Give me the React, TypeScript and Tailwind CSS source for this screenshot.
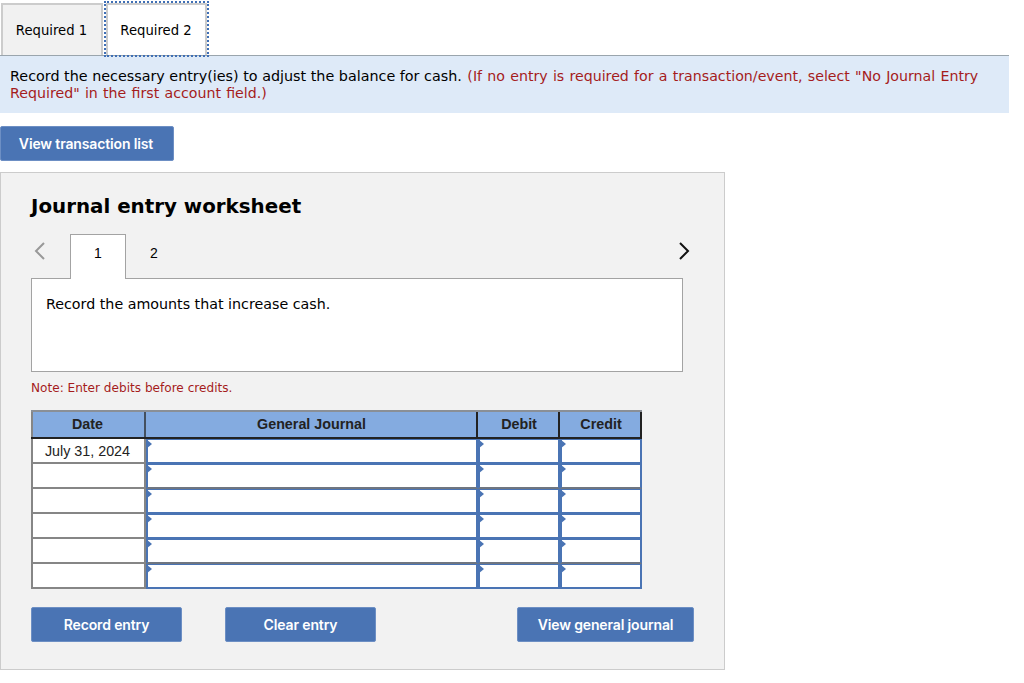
const verdana = "font-['DejaVu_Sans',sans-serif]";

function Cell({ w, gray }: { w: string; gray?: boolean }) {
  return (
    <div className={`relative ${w} h-full bg-white border-2 border-t border-[#4a74b4] ${gray ? "border-b-[#6f7680]" : ""}`}>
      <span className="absolute left-[-2px] top-[-1px] w-0 h-0 border-y-[5px] border-y-transparent border-l-[6px] border-l-[#4a74b4]" />
    </div>
  );
}

function Row({ date, gray }: { date?: string; gray?: boolean }) {
  return (
    <div className="flex h-[25px]">
      <div className="w-[115px] shrink-0 bg-white border-l-2 border-r-2 border-b-2 border-[#868686] pr-[2px] text-center text-[14.3px] leading-[24px] text-[#222]">
        {date}
      </div>
      <Cell w="w-[332px]" gray={gray} />
      <Cell w="w-[82px]" gray={gray} />
      <Cell w="w-[82px]" gray={gray} />
    </div>
  );
}

function Btn({ label, w, extra }: { label: string; w: string; extra?: string }) {
  return (
    <button className={`${w} ${extra ?? ""} h-[35px] rounded-[2px] bg-[#4a74b4] border border-[#6d8fc4] text-white text-[14px] font-semibold font-['Inter',sans-serif] tracking-[-0.14px]`}>
      {label}
    </button>
  );
}

export default function App() {
  return (
    <div className={`w-[1009px] h-[683px] bg-white ${verdana} text-black overflow-hidden`}>
      <div className="flex h-[56px] pt-[3px] pl-[1px] border-b border-[#9aa5ad]">
        <div className="w-[102px] h-[52px] bg-[#f1f1f1] border-2 border-b-0 border-[#cccccc] text-[13.2px] flex items-center justify-center pr-[1px] pt-[2px]">
          Required 1
        </div>
        <div className="relative z-10 ml-[3px] w-[101px] h-[52px] bg-white border-2 border-b-0 border-[#cccccc] outline-2 outline-dotted outline-[#3f6fb5] text-[13.2px] flex items-center justify-center pr-[1px] pt-[2px]">
          Required 2
        </div>
      </div>

      <div className="h-[57px] bg-[#deeaf8] px-[10px] pt-[12px] text-[14.33px] leading-[17px]">
        Record the necessary entry(ies) to adjust the balance for cash.{" "}
        <span className="ml-[1px] text-[#a51c1c] text-[14.2px] [word-spacing:0.7px]">
          (If no entry is required for a transaction/event, select "No Journal Entry Required" in the first account field.)
        </span>
      </div>

      <div className="mt-[13px]">
        <Btn label="View transaction list" w="w-[174px]" extra="pr-[2px]" />
      </div>

      <div className="mt-[11px] w-[725px] h-[498px] bg-[#f2f2f2] border border-[#cccccc] pl-[30px] pr-[41px]">
        <h2 className="pt-[21px] text-[19.85px] leading-[26px] font-bold">Journal entry worksheet</h2>

        <div className="relative mt-[14px] flex h-[45px] text-[14px] font-['Liberation_Sans',sans-serif]">
          <svg className="absolute left-[2px] top-[7px]" width="14" height="20" viewBox="0 0 14 20" fill="none">
            <path d="M11 2 L3 10 L11 18" stroke="#999999" strokeWidth="2" />
          </svg>
          <div className="relative z-10 ml-[39px] w-[56px] h-[45px] bg-white border border-b-0 border-[#a3a3a3] flex items-center justify-center pb-[7px]">
            1
          </div>
          <div className="w-[56px] flex items-center justify-center pb-[7px]">2</div>
          <svg className="absolute right-[-8px] top-[7px]" width="14" height="20" viewBox="0 0 14 20" fill="none">
            <path d="M3 2 L11 10 L3 18" stroke="#111111" strokeWidth="2" />
          </svg>
        </div>

        <div className="h-[94px] w-[652px] -mt-px bg-white border border-[#a3a3a3] pl-[14px] pt-[15px] text-[14.25px] leading-[20px]">
          Record the amounts that increase cash.
        </div>

        <p className="mt-[8px] text-[12.1px] leading-[16px] text-[#a51c1c]">Note: Enter debits before credits.</p>

        <div className="mt-[14px] w-[611px] font-['Liberation_Sans',sans-serif]">
          <div className="flex h-[29px] bg-[#84abe0] border-t-2 border-t-[#8a8f96] border-b-2 border-b-[#222222] text-[14.3px] font-bold text-[#222] text-center leading-[25px]">
            <div className="w-[115px] border-l-2 border-l-[#868686] border-r-2 border-r-[#44505f] pr-[2px]">Date</div>
            <div className="w-[332px] border-r-2 border-r-[#222] pl-[1px]">General Journal</div>
            <div className="w-[82px] border-r-2 border-r-[#222] pl-[2px]">Debit</div>
            <div className="w-[82px] border-r-2 border-r-[#222] pl-[2px]">Credit</div>
          </div>
          <Row date="July 31, 2024" />
          <Row gray />
          <Row />
          <Row />
          <Row gray />
          <Row />
        </div>

        <div className="mt-[18px] w-[663px] flex items-center">
          <Btn label="Record entry" w="w-[151px]" />
          <div className="ml-[43px]"><Btn label="Clear entry" w="w-[151px]" /></div>
          <div className="ml-auto"><Btn label="View general journal" w="w-[177px]" /></div>
        </div>
      </div>
    </div>
  );
}
